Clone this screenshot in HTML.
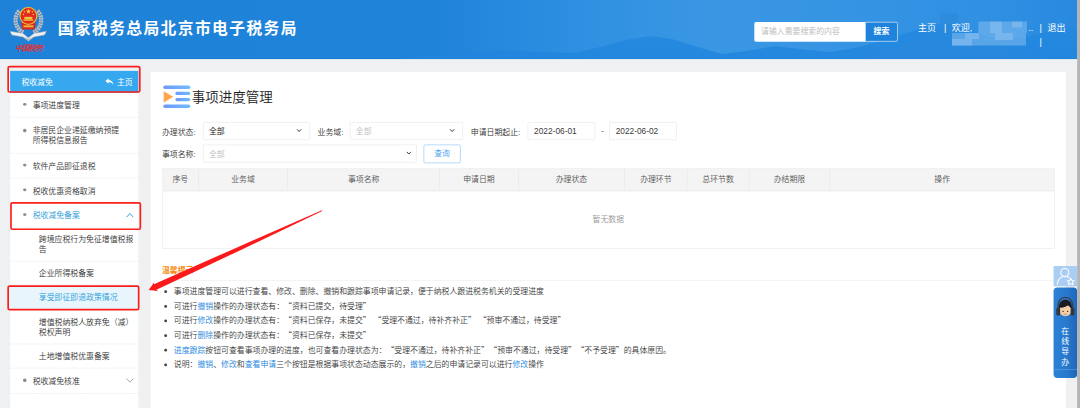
<!DOCTYPE html>
<html lang="zh-CN">
<head>
<meta charset="utf-8">
<title>国家税务总局北京市电子税务局</title>
<style>
*{box-sizing:border-box;margin:0;padding:0}
html,body{width:1080px;height:408px;overflow:hidden;background:#eff0f2}
body{font-family:"Liberation Sans","Noto Sans CJK SC",sans-serif;color:#333}
#side,#main{font-weight:350}
#stage{position:absolute;left:0;top:0;width:1920px;height:726px;transform:scale(0.5625);transform-origin:0 0;background:#eff0f2;overflow:hidden;font-size:14px}
#edge{position:absolute;left:1915px;top:0;width:5px;height:726px;background:#b4b4b4;z-index:50}
/* header */
#hd{position:absolute;left:0;top:0;width:1915px;height:104.5px;background:#1e82d9;overflow:hidden}
#hd .bgsvg{position:absolute;left:0;top:0}
#logo{position:absolute;left:0;top:0}
#title{position:absolute;left:102.5px;top:28.5px;font-size:28px;line-height:44px;font-weight:bold;color:#fff;letter-spacing:2.5px;white-space:nowrap}
#sbox{position:absolute;left:1341px;top:39px;width:198px;height:35px;background:#fff;border-radius:3px 0 0 3px;font-size:14px;line-height:35px;color:#bdbdbd;padding-left:12px;white-space:nowrap}
#sbtn{position:absolute;left:1538px;top:39px;width:58px;height:35px;border:1.5px solid #fff;border-radius:0 3px 3px 0;background:#1f83db;color:#fff;font-size:14px;font-weight:bold;line-height:32px;text-align:center}
#nav{position:absolute;left:1632px;top:36.5px;font-size:16px;line-height:26px;color:#fff;white-space:nowrap}
#nav span{position:absolute;top:0}
/* sidebar */
#side{position:absolute;left:18px;top:126px;width:228px;height:620px;background:#fff}
#side .head{font-weight:400;height:39px;background:#35a8ef;color:#fff;line-height:40px;padding-left:20px;font-size:14px;position:relative}
#side .head .home{position:absolute;right:10px;top:0;font-size:14px}
#side .head svg{position:absolute;left:169px;top:13px}
#side .it{position:relative;display:flex;align-items:center;height:44px;padding:0 30px 0 40px;line-height:18px;font-size:14px;color:#333;border-bottom:1px dashed #e1e1e1}
#side .it:before{content:"";position:absolute;left:23px;top:50%;margin-top:-4px;width:5.5px;height:5.5px;border-radius:50%;background:#8c8c8c}
#side .sub{position:relative;display:flex;align-items:center;height:43px;padding:0 8px 0 51px;line-height:18px;font-size:14px;color:#333;border-bottom:1px dashed #e1e1e1}
#side .two:before{top:20px;margin-top:0}
#side .act{color:#2a9bd8}
#side .sel{background:#e8f5fd;color:#2a9bd8}
.chev{position:absolute;left:206px;top:50%;margin-top:-5px}
.rb{position:absolute;border:3.2px solid #fa1f1b;border-radius:4px;z-index:20}
/* main */
#main{position:absolute;left:268px;top:127.5px;width:1627px;height:620px;background:#fff}
#ptitle{position:absolute;left:73px;top:27.5px;font-size:24px;line-height:36px;color:#222;white-space:nowrap}
.lbl{position:absolute;font-size:14px;line-height:32px;color:#333;white-space:nowrap}
.inp{position:absolute;height:31.5px;border:1px solid #e4e4e4;border-radius:2px;font-size:14px;line-height:32px;padding-left:9.5px;color:#222;font-weight:400;background:#fff;white-space:nowrap}
.inp.ph{color:#bdbdbd;font-weight:350}
.inp svg{position:absolute;top:10.5px}
.inp.dt{font-size:14.8px;padding-left:10.5px;color:#3a3a3a}
#qbtn{position:absolute;left:485px;top:129.5px;width:66px;height:33px;border:1.5px solid #7dbdf3;border-radius:3px;color:#3f9fee;font-size:14px;line-height:30px;text-align:center;background:#fff}
#tb{position:absolute;left:20px;top:171.5px;width:1587px;height:142.5px;border:1px solid #e6e6e6}
#tb .th{position:absolute;left:0;top:0;height:39.5px;width:100%;background:#f4f4f4;border-bottom:1px solid #e6e6e6}
#tb .th div{position:absolute;top:0;height:38px;line-height:38px;text-align:center;font-size:14px;color:#555;border-right:1px solid #e6e6e6}
#tb .nd{position:absolute;left:0;width:100%;top:79px;text-align:center;font-size:14px;line-height:20px;color:#999}
#tips{position:absolute;left:20px;top:341px;width:1587px}
#tips h4{font-size:14px;line-height:24px;color:#f78c14;font-weight:bold;height:30.5px;border-bottom:1px solid #ececec}
#tips ul{list-style:none;margin-top:6px}
#tips li{text-spacing-trim:space-all;height:26px;position:relative;font-size:14px;line-height:26px;color:#3a3a3a;padding-left:21px;white-space:nowrap}
#tips li:before{content:"";position:absolute;left:4px;top:11px;width:4.5px;height:4.5px;border-radius:50%;background:#444}
#tips b{font-weight:inherit;color:#1b86e0}
.q{line-height:0;font-family:"Noto Sans CJK SC","Liberation Sans",sans-serif}
#wsq{position:absolute;left:1873px;top:472.5px;width:41.5px;height:36px;background:#a9cdf3;z-index:30}
#wpn{position:absolute;left:1873px;top:510.5px;width:41.5px;height:161px;border-radius:7px;background:linear-gradient(90deg,#2c82d7 0%,#2879cd 55%,#1d67b9 100%);z-index:30;overflow:hidden}
#wpn .vt{position:absolute;left:0;top:68.5px;width:41.5px;text-align:center;color:#fff;font-size:14px;line-height:18.3px}
#wpn .ln{position:absolute;left:0;top:145px;width:100%;height:1.500px;background:#5fa3e6}
#arrow{position:absolute;left:0;top:0;z-index:40}
</style>
</head>
<body>
<div id="stage">
  <div id="hd">
    <svg class="bgsvg" width="1915" height="105" viewBox="0 0 1077.2 59" preserveAspectRatio="none">
      <defs>
        <linearGradient id="hg" x1="0" x2="1" y1="0" y2="0">
          <stop offset="0" stop-color="#1e82d9"/>
          <stop offset="0.40" stop-color="#1f83da"/>
          <stop offset="0.54" stop-color="#2f90e1"/>
          <stop offset="0.66" stop-color="#3a97e4"/>
          <stop offset="0.82" stop-color="#3493e3"/>
          <stop offset="0.93" stop-color="#2f8fe2"/>
          <stop offset="1" stop-color="#2989df"/>
        </linearGradient>
        <linearGradient id="mg" x1="0" x2="0" y1="0" y2="1">
          <stop offset="0" stop-color="#2489e0"/>
          <stop offset="1" stop-color="#2185de"/>
        </linearGradient>
      </defs>
      <rect x="0" y="0" width="1077.2" height="59" fill="url(#hg)"/>
      <rect x="0" y="58" width="1077.2" height="1" fill="#1673cc" opacity="0.55"/>
      <path d="M395 59 L450 54 L500 50 L545 52 L575 53 L600 47 L625 40 L650 36 L672 39 L698 47 L722 54 L745 51 L775 46 L800 49 L830 52 L860 47 L890 38 L915 30 L940 24 L958 24 L975 32 L1000 40 L1030 36 L1055 30 L1077.2 26 L1077.2 59 Z" fill="url(#mg)" opacity="0.85"/>
      <path d="M860 59 L900 46 L925 36 L940 28 L940 13 L958 13 L958 28 L985 42 L1020 52 L1050 59 Z" fill="#2a88da" opacity="0.55"/>
      <g fill="#8cc2f1" opacity="0.5">
        <rect x="978.5" y="21.5" width="48.5" height="11.5"/>
        <rect x="952" y="33" width="74" height="12.5"/>
      </g>
      <g fill="#a9d2f6" opacity="0.35">
        <rect x="990" y="21.5" width="12" height="11.5"/>
        <rect x="1012" y="21.5" width="10" height="6"/>
        <rect x="965" y="33" width="14" height="6"/>
        <rect x="995" y="33" width="18" height="7"/>
        <rect x="952" y="39" width="20" height="6.5"/>
      </g>
    </svg>
    <svg id="logo" width="107" height="105" viewBox="0 0 60 59">
      <g fill="none" stroke-linecap="butt">
        <path d="M19.200 10.800 C13.300 17 14.200 28 23.500 32.600" stroke="#bec1c5" stroke-width="4.2" stroke-dasharray="2 0.600"/>
        <path d="M37.400 10.800 C43.300 17 42.400 28 33.100 32.600" stroke="#bec1c5" stroke-width="4.2" stroke-dasharray="2 0.600"/>
        <path d="M19.200 10.800 C13.300 17 14.200 28 23.500 32.600" stroke="#7f8388" stroke-width="1.2" stroke-dasharray="0.800 1.800"/>
        <path d="M37.400 10.800 C43.300 17 42.400 28 33.100 32.600" stroke="#7f8388" stroke-width="1.2" stroke-dasharray="0.800 1.800"/>
      </g>
      <path d="M9.800 31.300 L22.500 33.200 L28.300 37.600 L34.100 33.200 L46.400 31.300 L44.400 34.900 L33.600 37 L28.300 40.900 L23 37 L11.800 34.900 Z" fill="#eff0f1" stroke="#9ea3aa" stroke-width="0.55"/>
      <path d="M23 37 L28.300 40.900 L33.600 37 L28.300 38.600 Z" fill="#b9bdc3"/>
      <path d="M21 22.500 H35.600 L34.600 29.500 H22 Z" fill="#d9251c"/>
      <circle cx="28.3" cy="15.9" r="9.1" fill="#e6b638"/>
      <circle cx="28.3" cy="15.9" r="7.8" fill="#e2271d"/>
      <rect x="23.300" y="25.300" width="10" height="2" fill="#e6b638"/>
      <rect x="24.300" y="16.800" width="8" height="2.800" fill="#efc443"/>
      <rect x="23.300" y="19.600" width="10" height="1.100" fill="#efc443"/>
      <path d="M28.3 8.700 L28.950 10.600 L31 10.600 L29.350 11.800 L29.950 13.700 L28.3 12.550 L26.650 13.700 L27.250 11.800 L25.600 10.600 L27.650 10.600 Z" fill="#f6d24a"/>
      <circle cx="24.300" cy="11.800" r="0.750" fill="#f6d24a"/><circle cx="32.300" cy="11.800" r="0.750" fill="#f6d24a"/>
      <circle cx="23.300" cy="14.600" r="0.750" fill="#f6d24a"/><circle cx="33.300" cy="14.600" r="0.750" fill="#f6d24a"/>
      <text x="14.8" y="51" textLength="28.4" lengthAdjust="spacing" font-family="'Liberation Sans','Noto Sans CJK SC',sans-serif" font-weight="500" font-size="8" fill="#ea2a1f" font-style="italic">中国税务</text>
    </svg>
    <div id="title">国家税务总局北京市电子税务局</div>
    <div id="sbox">请输入需要搜索的内容</div>
    <div id="sbtn">搜索</div>
    <div id="nav"><span style="left:0">主页</span><span style="left:46px">|</span><span style="left:60px">欢迎,</span><span style="left:196px">..</span><span style="left:216px">|</span><span style="left:230px">退出</span><span style="left:216px;top:25px">|</span></div>
  </div>

  <div id="side">
    <div class="head">税收减免<svg width="15" height="13" viewBox="0 0 15 13"><path d="M6 0.2 L0.2 5 L6 9.8 V6.9 C10 6.9 12.6 8.2 14.4 12.4 C14.4 6.6 11.2 3.3 6 3.1 Z" fill="#fff"/></svg><span class="home">主页</span></div>
    <div class="it">事项进度管理</div>
    <div class="it two" style="height:64px">非居民企业递延缴纳预提<br>所得税信息报告</div>
    <div class="it">软件产品即征退税</div>
    <div class="it">税收优惠资格取消</div>
    <div class="it act">税收减免备案<svg class="chev" width="14" height="9" viewBox="0 0 14 9"><path d="M1 8 L7 1.6 L13 8" fill="none" stroke="#2a9bd8" stroke-width="1.7"/></svg></div>
    <div class="sub" style="height:60px;line-height:17px">跨境应税行为免征增值税报告</div>
    <div class="sub" style="height:42px">企业所得税备案</div>
    <div class="sub sel" style="height:44px">享受即征即退政策情况</div>
    <div class="sub" style="height:61px">增值税纳税人放弃免（减）税权声明</div>
    <div class="sub" style="height:43px">土地增值税优惠备案</div>
    <div class="it" style="height:45px">税收减免核准<svg class="chev" width="14" height="9" viewBox="0 0 14 9"><path d="M1 1 L7 7.4 L13 1" fill="none" stroke="#999" stroke-width="1.5"/></svg></div>
  </div>
  <div class="rb" style="left:13px;top:117px;width:237px;height:48px"></div>
  <div class="rb" style="left:18px;top:359px;width:233px;height:49.5px"></div>
  <div class="rb" style="left:13px;top:506.5px;width:235px;height:45.5px"></div>

  <div id="main">
    <svg style="position:absolute;left:20px;top:22px" width="54" height="46" viewBox="0 0 54 46">
      <defs><linearGradient id="bg1" x1="0" x2="1" y1="0" y2="0"><stop offset="0" stop-color="#6d98fb"/><stop offset="1" stop-color="#6fbcfd"/></linearGradient></defs>
      <rect x="2.3" y="2" width="48" height="6.2" rx="3.1" fill="url(#bg1)"/>
      <rect x="23.8" y="13" width="26.5" height="6" rx="3" fill="url(#bg1)"/>
      <rect x="23.8" y="24" width="26.5" height="6" rx="3" fill="url(#bg1)"/>
      <rect x="2.3" y="35.8" width="48" height="6.2" rx="3.1" fill="url(#bg1)"/>
      <path d="M3 12 L20 22 L3 32 Z" fill="#ffa64b"/>
    </svg>
    <div id="ptitle">事项进度管理</div>
    <div class="lbl" style="left:20px;top:91px">办理状态:</div>
    <div class="inp" style="left:93px;top:89.5px;width:190px">全部<svg width="9.5" height="6" viewBox="0 0 11 7" style="left:165px"><path d="M1 1 L5.5 5.6 L10 1" fill="none" stroke="#333" stroke-width="2"/></svg></div>
    <div class="lbl" style="left:296.5px;top:91px">业务域:</div>
    <div class="inp ph" style="left:354px;top:89.5px;width:201px">全部<svg width="9.5" height="6" viewBox="0 0 11 7" style="left:176px"><path d="M1 1 L5.5 5.6 L10 1" fill="none" stroke="#333" stroke-width="2"/></svg></div>
    <div class="lbl" style="left:569px;top:91px">申请日期起止:</div>
    <div class="inp dt" style="left:670px;top:89.5px;width:120px">2022-06-01</div>
    <div class="lbl" style="left:801px;top:88px">-</div>
    <div class="inp dt" style="left:815px;top:89.5px;width:120px">2022-06-02</div>
    <div class="lbl" style="left:20px;top:130px">事项名称:</div>
    <div class="inp ph" style="left:93px;top:129.5px;width:380px;height:32px;line-height:33px">全部<svg width="9.5" height="6" viewBox="0 0 11 7" style="left:360px"><path d="M1 1 L5.5 5.6 L10 1" fill="none" stroke="#333" stroke-width="2"/></svg></div>
    <div id="qbtn">查询</div>
    <div id="tb">
      <div class="th">
        <div style="left:0;width:64px">序号</div>
        <div style="left:64px;width:159px">业务域</div>
        <div style="left:223px;width:270px">事项名称</div>
        <div style="left:493px;width:140px">申请日期</div>
        <div style="left:633px;width:189px">办理状态</div>
        <div style="left:822px;width:111px">办理环节</div>
        <div style="left:933px;width:110px">总环节数</div>
        <div style="left:1043px;width:144px">办结期限</div>
        <div style="left:1187px;width:398px;border-right:0">操作</div>
      </div>
      <div class="nd">暂无数据</div>
    </div>
    <div id="tips">
      <h4>温馨提示</h4>
      <ul>
        <li>事项进度管理可以进行查看、修改、删除、撤销和跟踪事项申请记录，便于纳税人跟进税务机关的受理进度</li>
        <li>可进行<b>撤销</b>操作的办理状态有：<span class="q">“</span>资料已提交，待受理<span class="q">”</span></li>
        <li style="word-spacing:1.1px">可进行<b>修改</b>操作的办理状态有：<span class="q">“</span>资料已保存，未提交<span class="q">”</span> <span class="q">“</span>受理不通过，待补齐补正<span class="q">”</span> <span class="q">“</span>预审不通过，待受理<span class="q">”</span></li>
        <li>可进行<b>删除</b>操作的办理状态有：<span class="q">“</span>资料已保存，未提交<span class="q">”</span></li>
        <li style="word-spacing:-3px"><b>进度跟踪</b>按钮可查看事项办理的进度，也可查看办理状态为：<span class="q">“</span>受理不通过，待补齐补正<span class="q">”</span> <span class="q">“</span>预审不通过，待受理<span class="q">”</span> <span class="q">“</span>不予受理<span class="q">”</span>的具体原因。</li>
        <li>说明：<b>撤销</b>、<b>修改</b>和<b>查看申请</b>三个按钮是根据事项状态动态展示的，<b>撤销</b>之后的申请记录可以进行<b>修改</b>操作</li>
      </ul>
    </div>
  </div>
  <div id="wsq"><svg width="42" height="36" viewBox="0 0 42 36"><g fill="none" stroke="#fff" stroke-width="2"><circle cx="20" cy="11.5" r="7.2"/><path d="M6.5 33 C7.5 24 12 20 16.5 18.6"/><path d="M23.5 18.6 C25.5 19.2 27 20 28.3 21.2"/><path d="M30.6 21.6 L32.6 25.5 L36.8 26.1 L33.7 29.1 L34.5 33.3 L30.6 31.3 L26.7 33.3 L27.5 29.1 L24.4 26.1 L28.6 25.5 Z" stroke-width="1.8" stroke-linejoin="round"/></g></svg></div>
  <div id="wpn">
    <svg width="34" height="57" viewBox="0 0 42 70" style="position:absolute;left:4px;top:11px">
      <path d="M5 33 C3.5 14 12 8 21 8 C30 8 38.500 14 37 33" fill="none" stroke="#3a3f47" stroke-width="3"/>
      <ellipse cx="21" cy="37" rx="13" ry="12.5" fill="#f7cfa6"/>
      <path d="M7 35 C5 18 14 13 21 13 C29 13 37 18 35 35 C32 30 30 28 27 25.5 C22 30 14 31 9.500 30.500 C8.500 32 7.500 33 7 35 Z" fill="#1c1c20"/>
      <rect x="1" y="31" width="8.5" height="17" rx="3.6" fill="#33373e"/>
      <rect x="32.5" y="31" width="8.5" height="17" rx="3.6" fill="#33373e"/>
      <circle cx="16" cy="39" r="1.4" fill="#222"/><circle cx="26" cy="39" r="1.4" fill="#222"/>
      <path d="M17.500 44.500 Q21 47 24.500 44.500" fill="none" stroke="#c0504a" stroke-width="1.2"/>
    </svg>
    <div class="vt">在<br>线<br>导<br>办</div>
    <div class="ln"></div>
  </div>
  <div id="edge"></div>
</div>
<svg id="arrow" width="1080" height="408" viewBox="0 0 1080 408"><path d="M148.65 290.07 L154.22 282.29 L153.95 284.34 L238.75 246.64 L321.91 210.19 L322.29 211.01 L240.37 250.19 L156.45 289.80 L158.17 290.93 Z" fill="#fb1a1b"/></svg>
</body>
</html>
